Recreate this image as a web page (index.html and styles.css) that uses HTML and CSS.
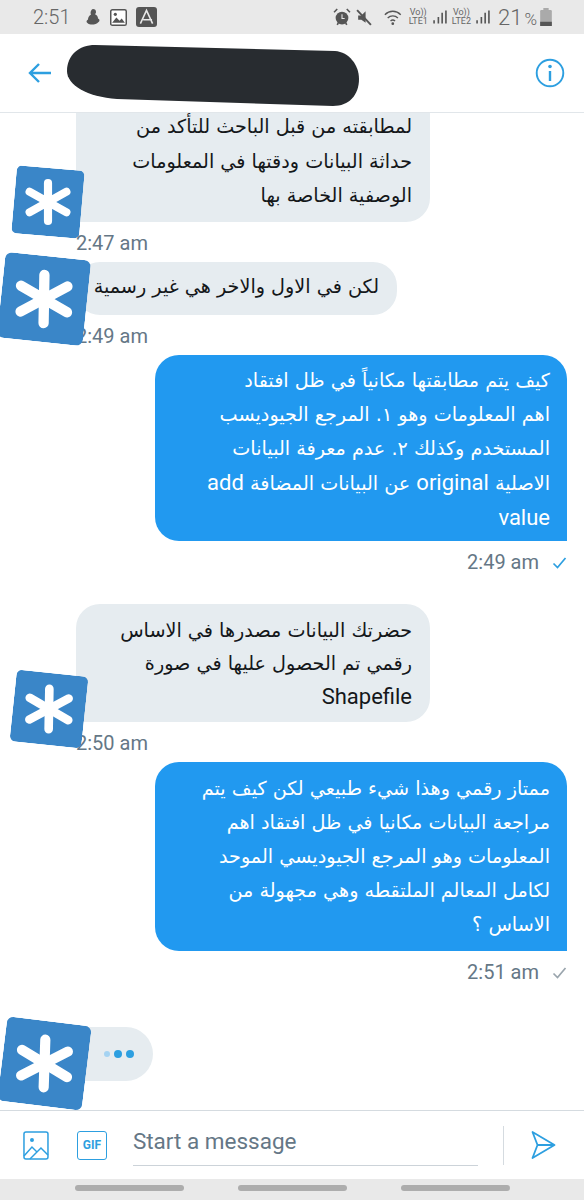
FILE: index.html
```html
<!DOCTYPE html>
<html>
<head>
    <meta charset="UTF-8">
    <meta name="viewport" content="width=device-width, initial-scale=1.0">
    <title>Chat</title>
    <link rel="stylesheet" href="styles.css">
</head>
<body>
    <svg class="defs" width="0" height="0">
        <symbol id="star" viewBox="0 0 100 100">
            <rect x="0" y="0" width="100" height="100" rx="8" fill="#3a86c8"/>
            <g stroke="#fff" stroke-width="12" stroke-linecap="round" transform="rotate(-5 50 50)">
                <path d="M50 22V78"/>
                <path d="M23 35L77 65"/>
                <path d="M77 35L23 65"/>
            </g>
        </symbol>
    </svg>

    <div class="status-bar">
        <div class="status-left">
            <span class="clock">2:51</span>
            <svg class="st-icon" width="16" height="18" viewBox="0 0 16 18"><path d="M8 1a3 3 0 0 1 3 3c0 1-.5 1.700-1 2.200 2 .8 3 2.500 3 4.300 2 .5 2 3 0 4-1 2-8 3-10 1-2-1-2-3 0-4 0-2 1-4 3-5-1-2 0-5 2-5.500z" fill="#555"/></svg>
            <svg class="st-icon" width="17" height="17" viewBox="0 0 16 16"><rect x="0.700" y="0.700" width="14.600" height="14.600" rx="1.500" fill="#fff" stroke="#555" stroke-width="1.400"/><path d="M2 13l4-5 3 3 2-2 3 4z" fill="#555"/><circle cx="5" cy="5" r="1.500" fill="#555"/></svg>
            <span class="app-badge"><svg width="21" height="20" viewBox="0 0 18 18"><path d="M3.500 15L9 3l5.500 12M6 11.500h8" fill="none" stroke="#e9e9e9" stroke-width="1.400"/></svg></span>
        </div>
        <div class="status-right">
            <svg class="st-icon" width="18" height="18" viewBox="0 0 17 17"><circle cx="8.500" cy="9.500" r="6" fill="#555"/><path d="M1 4l3-3M16 4l-3-3M4 16l1-2M13 16l-1-2" stroke="#555" stroke-width="1.500"/><path d="M8.500 6v4h2.500" stroke="#e9e9e9" fill="none"/></svg>
            <svg class="st-icon mute" width="16" height="17" viewBox="0 0 15 16"><path d="M2 6h3l4-4v11l-4-3H2z" fill="#555"/><path d="M1 1l13 14" stroke="#555" stroke-width="1.800"/></svg>
            <svg class="st-icon wifi" width="23" height="17" viewBox="0 0 19 15"><path d="M1 5c4-4 10-4 14 0M3.500 8c2.500-2.500 6.500-2.500 9 0M6 10.500c1.200-1 2.800-1 4 0" fill="none" stroke="#555" stroke-width="1.200"/><circle cx="8" cy="13" r="1.200" fill="#555"/></svg>
            <span class="lte">Vo))<br>LTE1</span>
            <svg class="st-icon bars" width="14" height="16" viewBox="0 0 13 14"><path d="M1 10v3M5 7v6M8.500 3v10M12 1v12" stroke="#555" stroke-width="1.500"/></svg>
            <span class="lte">Vo))<br>LTE2</span>
            <svg class="st-icon bars" width="14" height="16" viewBox="0 0 13 14"><path d="M1 10v3M5 7v6M8.500 3v10M12 1v12" stroke="#555" stroke-width="1.500"/></svg>
            <span class="percent">21<small>%</small></span>
            <svg class="st-icon" width="12" height="18" viewBox="0 0 11 17"><rect x="0" y="2" width="11" height="15" rx="1" fill="#aaa"/><rect x="3" y="0" width="5" height="2" fill="#aaa"/><rect x="0" y="13" width="11" height="4" fill="#555"/></svg>
        </div>
    </div>

    <header class="top-bar">
        <svg class="back" width="24" height="22" viewBox="0 0 24 22"><path d="M23 11H2M11 2L2 11l9 9" fill="none" stroke="#2d9fe0" stroke-width="2.400"/></svg>
        <svg class="blob" width="292" height="62" viewBox="0 0 292 62"><path d="M28 0L268 6C282 7 292 20 292 34C292 50 282 61 266 61L50 54C20 52 0 40 0 26C0 10 12 0 28 0Z" fill="#282c30"/></svg>
        <svg class="info" width="30" height="30" viewBox="0 0 30 30"><circle cx="15" cy="15" r="13.300" fill="none" stroke="#2d9fe0" stroke-width="1.900"/><circle cx="15" cy="8.500" r="1.800" fill="#2d9fe0"/><path d="M15 13v10" stroke="#2d9fe0" stroke-width="2.400"/></svg>
    </header>

    <main class="chat">
        <div class="msg in first">
            <div class="bubble" dir="rtl"><div class="lines">لمطابقته من قبل الباحث للتأكد من<br>حداثة البيانات ودقتها في المعلومات<br>الوصفية الخاصة بها</div></div>
            <svg class="avatar av1"><use href="#star"/></svg>
            <div class="time">2:47 am</div>
        </div>
        <div class="msg in second">
            <div class="bubble" dir="rtl">لكن في الاول والاخر هي غير رسمية</div>
            <svg class="avatar av2"><use href="#star"/></svg>
            <div class="time">2:49 am</div>
        </div>
        <div class="msg out third">
            <div class="bubble" dir="rtl">كيف يتم مطابقتها مكانياً في ظل افتقاد<br>اهم المعلومات وهو ١. المرجع الجيوديسب<br>المستخدم وكذلك ٢. عدم معرفة البيانات<br>الاصلية <span class="latin">original</span> عن البيانات المضافة <span class="latin">add</span><br><span class="latin">value</span></div>
            <div class="time">2:49 am
                <svg class="tick" width="15" height="12" viewBox="0 0 15 12"><path d="M1.500 6.500l4 4 8-9.500" fill="none" stroke="#2d9fe0" stroke-width="1.700"/></svg>
            </div>
        </div>
        <div class="msg in fourth">
            <div class="bubble" dir="rtl">حضرتك البيانات مصدرها في الاساس<br>رقمي تم الحصول عليها في صورة<br><span class="latin">Shapefile</span></div>
            <svg class="avatar av3"><use href="#star"/></svg>
            <div class="time">2:50 am</div>
        </div>
        <div class="msg out fifth">
            <div class="bubble" dir="rtl">ممتاز رقمي وهذا شيء طبيعي لكن كيف يتم<br>مراجعة البيانات مكانيا في ظل افتقاد اهم<br>المعلومات وهو المرجع الجيوديسي الموحد<br>لكامل المعالم الملتقطه وهي مجهولة من<br>الاساس ؟</div>
            <div class="time">2:51 am
                <svg class="tick" width="15" height="12" viewBox="0 0 15 12"><path d="M1.500 6.500l4 4 8-9.500" fill="none" stroke="#9aa5ad" stroke-width="1.700"/></svg>
            </div>
        </div>
        <div class="msg in typing-row">
            <div class="typing">
                <span class="dot faded"></span>
                <span class="dot"></span>
                <span class="dot"></span>
            </div>
            <svg class="avatar av4"><use href="#star"/></svg>
        </div>
    </main>

    <footer class="composer">
        <svg class="c-icon" width="28" height="29" viewBox="0 0 26 29"><rect x="1" y="1" width="24" height="27" rx="2" fill="none" stroke="#2d9fe0" stroke-width="1.500"/><circle cx="9" cy="9" r="2" fill="#2d9fe0"/><path d="M1 25l8-9 5 5 4-4 7 7M7 28l7-7" fill="none" stroke="#2d9fe0" stroke-width="1.500"/></svg>
        <span class="gif">GIF</span>
        <div class="input">Start a message</div>
        <div class="send-wrap">
            <svg width="27" height="30" viewBox="0 0 26 30"><path d="M2 2l22 13L2 28l5-13zM7 15h17" fill="none" stroke="#2d9fe0" stroke-width="1.800" stroke-linejoin="round"/></svg>
        </div>
    </footer>

    <nav class="nav-bar">
        <span class="pill"></span>
        <span class="pill"></span>
        <span class="pill"></span>
    </nav>
</body>
</html>
```

FILE: styles.css
```css
body {
    margin: 0;
    padding: 0;
    background-color: #fff;
    font-family: Roboto, "DejaVu Sans", sans-serif;
    height: 1200px;
    overflow: hidden;
    display: flex;
    flex-direction: column;
}
.defs {
    position: absolute;
}
.status-bar {
    height: 34px;
    background-color: #e9e9e9;
    display: flex;
    justify-content: space-between;
    align-items: center;
    padding: 0 32px 0 33px;
    color: #666;
}
.status-left, .status-right {
    display: flex;
    align-items: center;
}
.status-left {
    gap: 9px;
}
.status-right {
    gap: 3px;
}
.clock {
    font-size: 20px;
    font-weight: 300;
    margin-right: 6px;
}
.st-icon {
    display: block;
}
.mute {
    margin: 0 8px 0 2px;
}
.app-badge {
    width: 21px;
    height: 20px;
    background-color: #555;
    border-radius: 3px;
}
.lte {
    font-size: 9px;
    line-height: 9px;
    text-align: center;
}
.bars {
    margin: 0 2px;
}
.percent {
    font-size: 22px;
    font-weight: 300;
    margin-left: 3px;
}
.percent small {
    font-size: 17px;
    margin-left: 2px;
}
.top-bar {
    height: 78px;
    border-bottom: 1px solid #e1e6ea;
    display: flex;
    align-items: center;
    padding: 0 19px 0 28px;
}
.blob {
    margin-left: 15px;
    margin-top: 6px;
}
.info {
    margin-left: auto;
}
.chat {
    flex: 1;
    position: relative;
    display: flex;
    flex-direction: column;
}
.msg {
    position: relative;
    display: flex;
    flex-direction: column;
}
.msg.in {
    align-items: flex-start;
    padding-left: 76px;
}
.msg.out {
    align-items: flex-end;
    padding-right: 17px;
}
.bubble {
    box-sizing: border-box;
    font-family: "DejaVu Sans", Roboto, sans-serif;
    font-size: 19.200px;
    line-height: 34px;
    white-space: nowrap;
    color: #14171a;
    background-color: #e6ecf0;
    border-radius: 24px 24px 24px 0;
    padding: 9px 18px 9px 18px;
}
.latin {
    font-family: Roboto, sans-serif;
    font-size: 22px;
}
.out .bubble {
    color: #fff;
    background-color: #2199f0;
    border-radius: 24px 24px 0 24px;
    width: 412px;
    padding: 9px 17px 9px 17px;
}
.time {
    font-size: 20px;
    color: #657786;
    line-height: 21px;
    margin-top: 11px;
}
.tick {
    margin-left: 8px;
}
.first .bubble {
    width: 354px;
    padding-top: 0;
    border-radius: 0 0 24px 0;
    height: 109px;
    line-height: 34.500px;
}
.first .lines {
    margin-top: -3px;
}
.first {
    margin-bottom: 8px;
}
.second .bubble {
    width: 321px;
    height: 53px;
    padding-top: 8px;
    border-radius: 24px;
}
.second {
    margin-bottom: 8px;
}
.third {
    margin-bottom: 31px;
}
.third .bubble {
    height: 186px;
}
.fourth .bubble {
    width: 354px;
    height: 118px;
    padding-top: 10px;
    line-height: 33px;
}
.fourth {
    margin-bottom: 8px;
}
.fifth .bubble {
    height: 189px;
    padding-top: 10px;
}
.fifth {
    margin-bottom: 44px;
}
.typing {
    width: 77px;
    height: 54px;
    background-color: #e6ecf0;
    border-radius: 0 27px 27px 0;
    display: flex;
    align-items: center;
    justify-content: flex-end;
    gap: 4px;
    padding-right: 19px;
    box-sizing: border-box;
}
.dot {
    width: 8px;
    height: 8px;
    border-radius: 50%;
    background-color: #2d9fe0;
}
.dot.faded {
    width: 6px;
    height: 6px;
    background-color: #a5d3f2;
}
.avatar {
    position: absolute;
    display: block;
}
.av1 {
    left: 14px;
    top: 55px;
    width: 68px;
    height: 68px;
    transform: rotate(5deg);
}
.av2 {
    left: 1px;
    top: -6px;
    width: 86px;
    height: 86px;
    transform: rotate(6deg);
}
.av3 {
    left: 13px;
    top: 69px;
    width: 72px;
    height: 72px;
    transform: rotate(6deg);
}
.av4 {
    left: 2px;
    top: -6px;
    width: 85px;
    height: 85px;
    transform: rotate(7deg);
}
.composer {
    height: 68px;
    border-top: 1px solid #d5dbe0;
    display: flex;
    align-items: center;
    padding: 0 27px 0 22px;
}
.gif {
    box-sizing: border-box;
    width: 30px;
    height: 29px;
    margin-left: 27px;
    border: 1.500px solid #2d9fe0;
    border-radius: 3px;
    color: #2d9fe0;
    font-size: 12px;
    font-weight: 700;
    line-height: 26px;
    text-align: center;
}
.input {
    width: 346px;
    height: 42px;
    margin-left: 26px;
    box-sizing: border-box;
    border-bottom: 1.500px solid #ccd3d9;
    color: #657786;
    font-size: 22.500px;
    line-height: 34px;
}
.send-wrap {
    margin-left: 25px;
    padding-left: 26px;
    border-left: 1px solid #d5dbe0;
    height: 39px;
    display: flex;
    align-items: center;
}
.nav-bar {
    height: 21px;
    background-color: #e9e9e9;
    display: flex;
    justify-content: center;
    gap: 54px;
    padding-top: 6px;
    box-sizing: border-box;
}
.pill {
    width: 109px;
    height: 6px;
    border-radius: 3px;
    background-color: #adadad;
}
```
